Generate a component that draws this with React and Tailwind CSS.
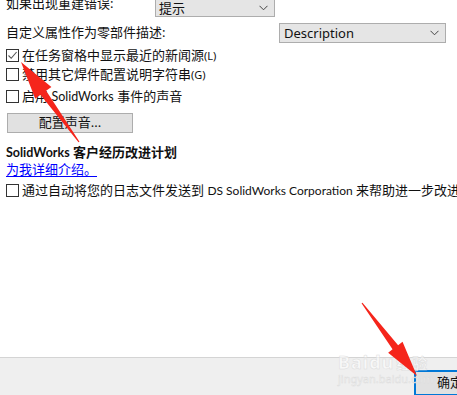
import React from 'react'

const FONT = "font-['Noto_Sans','Noto_Sans_CJK_SC',sans-serif]"

// texte latin plus étroit, proche de Segoe UI
function L({ children, className = 'text-[12.5px]' }) {
  return <span className={`font-['Lato','Noto_Sans',sans-serif] ${className}`}>{children}</span>
}

function Chevron() {
  return (
    <svg width="9" height="6" viewBox="0 0 9 6" className="shrink-0">
      <path d="M0.5 0.8 L4.5 4.8 L8.5 0.8" fill="none" stroke="#444" strokeWidth="1" />
    </svg>
  )
}

function Box({ checked }) {
  return (
    <span className="flex h-[13px] w-[13px] shrink-0 items-center justify-center border border-[#333] bg-white">
      {checked && (
        <svg width="11" height="11" viewBox="0 0 11 11">
          <path d="M1.5 5.5 L4.2 8.3 L9.6 2" fill="none" stroke="#555" strokeWidth="1.1" />
        </svg>
      )}
    </span>
  )
}

function Check({ checked, children, className = '' }) {
  return (
    <div className={`flex h-[13px] items-center gap-[3px] pl-[6px] ${className}`}>
      <Box checked={checked} />
      <span className="whitespace-nowrap leading-[13px]">{children}</span>
    </div>
  )
}

function Select({ value, className }) {
  return (
    <div className={`flex items-center justify-between border border-[#adadad] bg-[#e5e5e5] pr-[6px] ${className}`}>
      <span className="leading-none">{value}</span>
      <Chevron />
    </div>
  )
}

// flèche rouge façon capture Baidu : pointe triangulaire + tige effilée
function Arrow({ tail, tip, head = 34, half = 9, shaft = 3.5 }) {
  const dx = tip[0] - tail[0]
  const dy = tip[1] - tail[1]
  const len = Math.hypot(dx, dy)
  const ux = dx / len
  const uy = dy / len
  const nx = -uy
  const ny = ux
  const bx = tip[0] - ux * head
  const by = tip[1] - uy * head
  const pts = [
    [tip[0], tip[1]],
    [bx + nx * half, by + ny * half],
    [bx + nx * shaft, by + ny * shaft],
    [tail[0] + nx * 0.6, tail[1] + ny * 0.6],
    [tail[0] - nx * 0.6, tail[1] - ny * 0.6],
    [bx - nx * shaft, by - ny * shaft],
    [bx - nx * half, by - ny * half],
  ]
  return <polygon points={pts.map((p) => p.join(',')).join(' ')} fill="#f5251b" />
}

export default function App() {
  return (
    <div className={`relative flex h-[395px] w-[457px] flex-col overflow-hidden bg-white text-[13px] text-[#111] ${FONT}`}>
      <div className="flex flex-col">
        {/* ligne tronquée en haut */}
        <div className="-mt-px flex h-[18px] items-start">
          <span className="-mt-[5px] w-[155px] pl-[6px] leading-[18px]">如果出现重建错误:</span>
          <Select value="提示" className="h-[18px] w-[120px] pl-[3px]" />
        </div>

        <div className="mt-[6px] flex h-[20px] items-center">
          <span className="w-[279px] pl-[6px]">自定义属性作为零部件描述:</span>
          <Select value="Description" className="h-[20px] w-[167px] pl-[4px]" />
        </div>

        <Check checked className="mt-[6px]">在任务窗格中显示最近的新闻源<span className="text-[11px]">(L)</span></Check>
        <Check className="mt-[6px]">禁用其它焊件配置说明字符串<span className="text-[11px]">(G)</span></Check>
        <Check className="mt-[9px]">启用 <L>SolidWorks</L> 事件的声音</Check>

        <div className="ml-[7px] mt-[10px] flex h-[20px] w-[126px] items-center justify-center border border-[#adadad] bg-[#e1e1e1]">
          配置声音...
        </div>

        <div className="mt-[11px] pl-[6px] font-bold leading-[16px]"><L>SolidWorks</L> 客户经历改进计划</div>
        <div className="pl-[6px] leading-[16px]">
          <span className="text-[#0000ff] underline underline-offset-2">为我详细介绍。</span>
        </div>
        <Check className="mt-[7px]">通过自动将您的日志文件发送到 <L className="text-[12px]">DS SolidWorks Corporation</L> 来帮助进一步改进</Check>
      </div>

      <div className="flex-1" />

      <div className="flex h-[38px] shrink-0 items-start border-t border-[#d4d4d4] bg-[#efefef] pl-[414px] pt-[12px]">
        <div className="flex h-[26px] w-[75px] shrink-0 items-center border-2 border-[#0078d7] bg-[#e1e1e1] pl-[21px]">
          确定
        </div>
      </div>

      {/* filigrane Baidu */}
      <div className="pointer-events-none absolute left-[338px] top-[353px] flex flex-col leading-none text-white/60 [-webkit-text-stroke:0.5px_#dcdcdc]">
        <span className="text-[18px] font-bold tracking-[1px]">Baidu<span className="ml-[2px] text-[15px]">经验</span></span>
        <span className="mt-[2px] text-[11px]">jingyan.baidu.com</span>
      </div>

      <svg className="pointer-events-none absolute left-0 top-0" width="457" height="395">
        <Arrow tail={[79, 142]} tip={[21, 62]} head={38} half={10} shaft={3.5} />
        <Arrow tail={[362, 303]} tip={[417, 376]} head={36} half={9} shaft={3.5} />
      </svg>
    </div>
  )
}
